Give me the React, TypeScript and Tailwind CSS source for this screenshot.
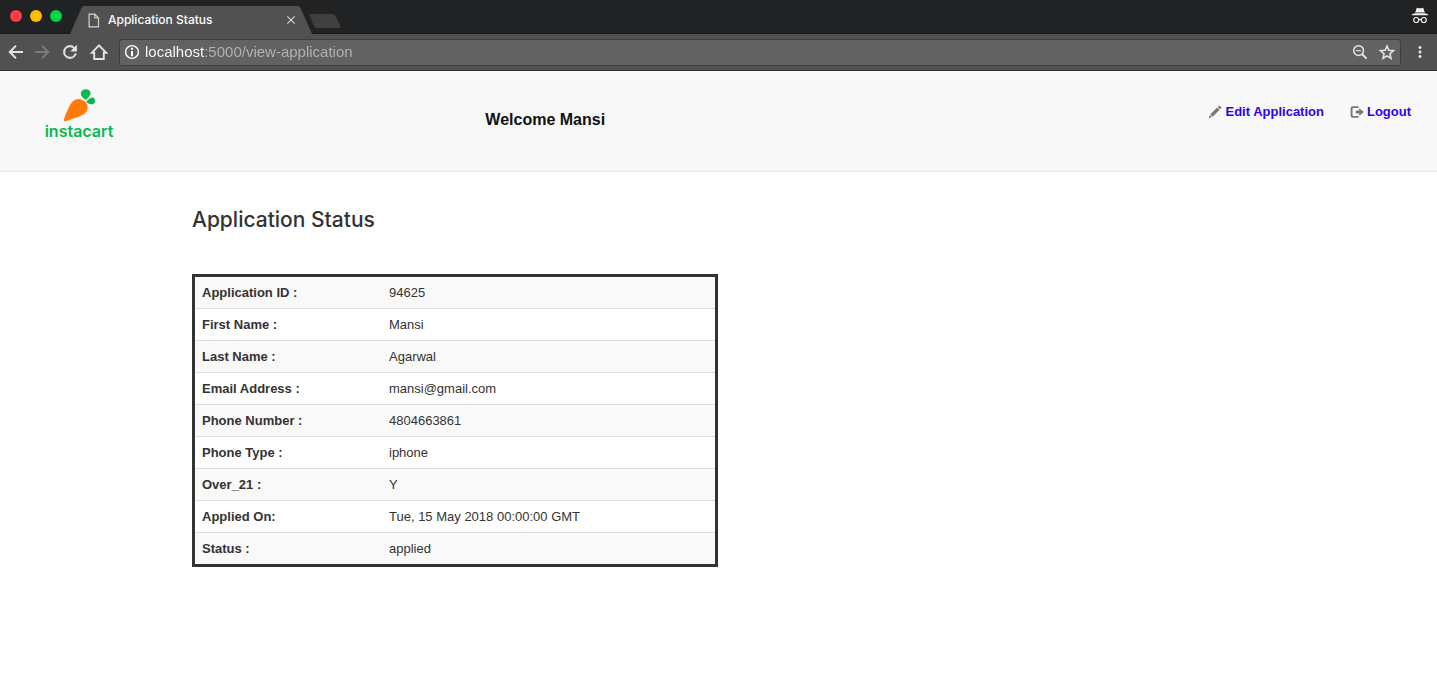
import React from "react";
import { MdClose, MdMoreVert } from "react-icons/md";

const rows: [string, string][] = [
  ["Application ID :", "94625"],
  ["First Name :", "Mansi"],
  ["Last Name :", "Agarwal"],
  ["Email Address :", "mansi@gmail.com"],
  ["Phone Number :", "4804663861"],
  ["Phone Type :", "iphone"],
  ["Over_21 :", "Y"],
  ["Applied On:", "Tue, 15 May 2018 00:00:00 GMT"],
  ["Status :", "applied"],
];

function IncognitoIcon() {
  return (
    <svg width="18" height="18" viewBox="0 0 18 18" fill="#f1f1f1" aria-hidden="true">
      <path d="M5.8.8q1.6.5 3.2.5t3.200-.5l1.600 4.700H4.200zM.8 7.600l3-1.400h10.400l3 1.400v.6H.8z" />
      <g fill="none" stroke="#f1f1f1" strokeWidth="1.2">
        <circle cx="5.2" cy="13" r="2.500" />
        <circle cx="12.800" cy="13" r="2.500" />
        <path d="M7.700 12.800q1.300-.8 2.600 0" />
      </g>
    </svg>
  );
}

function ArrowIcon({ forward = false }: { forward?: boolean }) {
  return (
    <svg width="16" height="16" viewBox="0 0 16 16" fill="none" stroke="currentColor" strokeWidth="2" aria-hidden="true">
      <path d={forward ? "M1 8h13M8 1.6 14.2 8 8 14.4" : "M15 8H2M8 1.6 1.8 8 8 14.4"} />
    </svg>
  );
}

function ReloadIcon() {
  return (
    <svg width="20" height="20" viewBox="0 0 24 24" fill="currentColor" stroke="currentColor" strokeWidth="0.6" aria-hidden="true">
      <path d="M17.65 6.35A7.96 7.96 0 0 0 12 4a8 8 0 1 0 7.73 10h-2.08A6 6 0 1 1 12 6c1.66 0 3.14.69 4.22 1.78L13 11h7V4z" />
    </svg>
  );
}

function StarIcon() {
  return (
    <svg width="18" height="18" viewBox="0 0 24 24" fill="none" stroke="currentColor" strokeWidth="2.1" aria-hidden="true">
      <path d="m12 4 2.400 5.800 6.200.5-4.700 4.100 1.400 6.100L12 17.200l-5.300 3.300 1.400-6.100-4.700-4.100 6.200-.5z" />
    </svg>
  );
}

function HomeIcon() {
  return (
    <svg width="18" height="18" viewBox="0 0 18 18" fill="none" stroke="#e4e4e4" strokeWidth="1.9" aria-hidden="true">
      <path d="M1.8 9.8 9 2.4l7.2 7.4H13.8V16H4.2V9.8z" />
    </svg>
  );
}

function InfoIcon() {
  return (
    <svg width="16" height="16" viewBox="0 0 16 16" fill="#fff" aria-hidden="true">
      <circle cx="8" cy="8" r="6.4" fill="none" stroke="#fff" strokeWidth="1.4" />
      <path d="M7 3.8h2v2H7zM7 7h2v5.2H7z" />
    </svg>
  );
}

function ZoomOutIcon() {
  return (
    <svg width="16" height="16" viewBox="0 0 16 16" fill="none" stroke="currentColor" aria-hidden="true">
      <circle cx="6.6" cy="6.6" r="4.9" strokeWidth="1.5" />
      <path d="M4.2 6.6H9" strokeWidth="1.2" />
      <path d="m10.2 10.2 4.4 4.4" strokeWidth="2" />
    </svg>
  );
}

function PageIcon() {
  return (
    <svg width="12" height="15" viewBox="0 0 12 15" fill="none" stroke="#d2d2d2" strokeWidth="1.2" aria-hidden="true">
      <path d="M1.1 1.1h5.7l3.7 3.9v8.9H1.1zM6.8 1.1V5h3.7" />
    </svg>
  );
}

function PencilIcon() {
  return (
    <svg width="14" height="14" viewBox="0 0 14 14" fill="#777" aria-hidden="true">
      <path d="M10.7.9q.6-.5 1.2 0l1.2 1.2q.5.6 0 1.2l-.9.9-2.4-2.4zM9.2 2.4l2.4 2.4-7 7-2.4-2.4zM1.7 10.1l2.2 2.2L.7 13.3z" />
    </svg>
  );
}

function LogoutIcon() {
  return (
    <svg width="14" height="14" viewBox="0 0 14 14" fill="#777" aria-hidden="true">
      <path d="M8.5 1.2v1.9H3.4q-.9 0-.9.9v6q0 .9.9.9h5.1v1.9H3Q.6 12.8.6 10.4V3.6Q.6 1.2 3 1.2z" />
      <path d="M9.2 3.2 13.9 7l-4.7 3.8V8.4H5.9V5.6h3.3z" />
    </svg>
  );
}

function Logo() {
  return (
    <a href="#home" className="flex w-[72px] flex-col items-center font-['Inter','Liberation_Sans',sans-serif]">
      <svg width="34" height="33" viewBox="0 0 34 33" aria-hidden="true">
        <path
          fill="#ff7a0a"
          d="M2.2 32C1.2 31.4 2.900 27.200 4.900 22.600 7.600 16.400 10.600 10.100 16.600 10.100c4.900 0 9 4 9 8.600 0 4.300-3.300 6.500-8.600 8.900C11.400 30 3.200 32.600 2.200 32z"
        />
        <path
          fill="#0ab84e"
          d="M23.600 11C20.600 9.200 17.400 5.200 19.400 2.400 20.900.2 24.400-.5 26.700 1c4 2.500 1 6.900-3.100 10zM24.200 13c2.400-3.200 5.900-6 8-3.700 1.100 1.200 1.100 3.900.1 5-1.900 2.200-5.300.6-8.100-1.300z"
        />
      </svg>
      <span className="text-base leading-[18px] font-semibold text-[#0ab84e]">instacart</span>
    </a>
  );
}

function BrowserBar() {
  return (
    <header className="border-b border-[#303030] bg-[#515151]">
      <div className="flex h-[34px] items-end border-b border-[#191a1b] bg-[#202224] pr-2">
        <div className="flex gap-2 self-start pt-[10px] pl-[10px]">
          <button aria-label="Close window" className="size-3 rounded-full bg-[#ff3b47]" />
          <button aria-label="Minimize window" className="size-3 rounded-full bg-[#ffbd00]" />
          <button aria-label="Zoom window" className="size-3 rounded-full bg-[#00d63f]" />
        </div>
        <div className="-mb-px ml-2 flex h-7">
          <svg width="14" height="28" viewBox="0 0 14 28" aria-hidden="true">
            <path d="M0 28 11.2 2.5Q12.2 0 14 0v28z" fill="#515151" />
          </svg>
          <div className="flex w-[214px] items-center bg-[#515151] pl-1">
            <PageIcon />
            <span className="ml-2 flex-1 font-['Inter',sans-serif] text-xs font-medium text-white">
              Application Status
            </span>
            <button aria-label="Close tab" className="text-[#d6d6d6]">
              <MdClose size={14} />
            </button>
          </div>
          <svg width="14" height="28" viewBox="0 0 14 28" aria-hidden="true">
            <path d="M14 28 2.800 2.500Q1.800 0 0 0v28z" fill="#515151" />
          </svg>
        </div>
        <button aria-label="New tab" className="-ml-1 mb-1">
          <svg width="34" height="16" viewBox="0 0 34 16" aria-hidden="true">
            <path d="M1 1h23.500q2 0 3 2l5 10.500q.5 1.500-1 1.500H9q-2 0-3-2z" fill="#404040" />
          </svg>
        </button>
        <div className="mb-2 ml-auto">
          <IncognitoIcon />
        </div>
      </div>
      <div className="flex h-9 items-center pr-2 text-[#e4e4e4]">
        <nav className="flex items-center gap-[10px] pl-2">
          <button aria-label="Back"><ArrowIcon /></button>
          <button aria-label="Forward" className="text-[#7c7c7c]"><ArrowIcon forward /></button>
          <button aria-label="Reload"><ReloadIcon /></button>
          <button aria-label="Home"><HomeIcon /></button>
        </nav>
        <div className="ml-[11px] flex h-[27px] flex-1 items-center rounded-[3px] border border-[#3d3d3d] bg-[#626262] px-1">
          <InfoIcon />
          <input
            aria-label="Address"
            defaultValue="localhost:5000/view-application"
            className="ml-[5px] min-w-0 flex-1 bg-[linear-gradient(90deg,#ffffff_59px,#b4b4b4_59px)] bg-clip-text font-['Liberation_Sans',Arial,sans-serif] text-[15px] text-transparent outline-none"
          />
          <div className="flex items-center gap-[10px]">
            <button aria-label="Zoom out"><ZoomOutIcon /></button>
            <button aria-label="Bookmark"><StarIcon /></button>
          </div>
        </div>
        <button aria-label="Menu" className="ml-[10px]"><MdMoreVert size={18} /></button>
      </div>
    </header>
  );
}

export default function App() {
  return (
    <div className="min-h-screen bg-white font-['Liberation_Sans',Arial,sans-serif] text-[13px] text-[#333]">
      <BrowserBar />
      <div className="grid h-[101px] grid-cols-3 border-b border-[#e7e7e7] bg-[#f8f8f8] pr-[26px]">
        <div className="pt-[18px] pl-[43px]">
          <Logo />
        </div>
        <p className="pt-9 pl-[15px] text-base leading-[26px] font-bold text-[#111]">Welcome Mansi</p>
        <nav className="flex items-start justify-end gap-[26px] pt-8 leading-[18px] font-bold text-[#3300ee]">
          <a href="#edit" className="flex items-center gap-[3px]">
            <PencilIcon />
            Edit Application
          </a>
          <a href="#logout" className="flex items-center gap-[3px]">
            <LogoutIcon />
            Logout
          </a>
        </nav>
      </div>
      <main className="px-48 pt-8">
        <h1 className="font-['Inter','Liberation_Sans',sans-serif] text-[21px] leading-8 font-medium">
          Application Status
        </h1>
        <table className="mt-[38px] w-full max-w-[526px] border-separate border-spacing-0 border-[3px] border-[#333] text-left">
          <tbody>
            {rows.map(([label, value]) => (
              <tr key={label} className="group odd:bg-[#f9f9f9]">
                <th
                  scope="row"
                  className="w-[187px] border-b border-[#ddd] px-[7px] py-[6px] leading-[19px] font-bold group-last:border-b-0"
                >
                  {label}
                </th>
                <td className="border-b border-[#ddd] px-[7px] py-[6px] leading-[19px] group-last:border-b-0">
                  {value}
                </td>
              </tr>
            ))}
          </tbody>
        </table>
      </main>
    </div>
  );
}
